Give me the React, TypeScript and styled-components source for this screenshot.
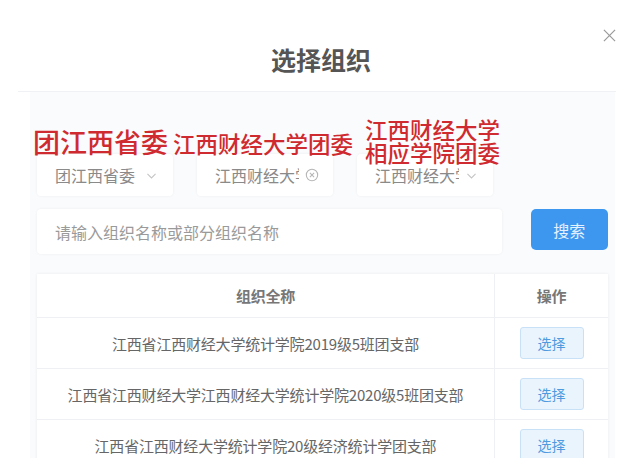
import styled, { createGlobalStyle } from 'styled-components';

const GlobalStyle = createGlobalStyle`
  html, body {
    margin: 0;
    padding: 0;
    background: #ffffff;
    font-family: "Noto Sans CJK SC", "Noto Sans", sans-serif;
  }
`;

const Dialog = styled.div`
  position: relative;
  width: 640px;
  height: 458px;
  overflow: hidden;
  background: #fff;
`;

const Header = styled.div`
  height: 92px;
  box-sizing: border-box;
  margin: 0 24px 0 18px;
  padding-top: 44px;
  display: flex;
  justify-content: center;
  border-bottom: 1px solid #f0f1f4;
`;

const Title = styled.h2`
  margin: 0 0 0 8px;
  font-size: 25px;
  line-height: 30px;
  font-weight: 700;
  color: #555;
`;

const CloseButton = styled.button`
  position: absolute;
  top: 26px;
  right: 22px;
  width: 18px;
  height: 18px;
  padding: 0;
  border: none;
  background: none;
  display: flex;
  align-items: center;
  justify-content: center;
`;

const Body = styled.div`
  position: relative;
  margin: 0 25px 0 30px;
  padding: 62px 7px 0 7px;
  background: #fafbfc;
  min-height: 400px;
`;

const Note = styled.div<{ size: number }>`
  position: absolute;
  color: #cf2a2f;
  font-size: ${({ size }) => size}px;
  line-height: 1;
  font-weight: 500;
  white-space: nowrap;
`;

const SelectRow = styled.div`
  display: flex;
  gap: 24px;
`;

const Select = styled.div`
  width: 136px;
  height: 42px;
  box-sizing: border-box;
  background: #fff;
  border-radius: 4px;
  box-shadow: 0 0 3px rgba(0, 0, 0, 0.06);
  display: flex;
  align-items: center;
  padding: 0 12px 0 18px;
  gap: 6px;
  color: #8a8a8a;
  font-size: 16px;
`;

const SelectText = styled.span`
  flex: 1;
  overflow: hidden;
  white-space: nowrap;
  max-width: 84px;
`;

const SearchRow = styled.div`
  display: flex;
  align-items: flex-start;
  margin-top: 13px;
  gap: 29px;
`;

const SearchInput = styled.div`
  width: 468px;
  height: 45px;
  box-sizing: border-box;
  background: #fff;
  border-radius: 4px;
  box-shadow: 0 0 3px rgba(0, 0, 0, 0.06);
  display: flex;
  align-items: center;
  padding-left: 18px;
  color: #9a9a9a;
  font-size: 16px;
`;

const SearchButton = styled.button`
  width: 78px;
  height: 41px;
  border: none;
  border-radius: 5px;
  background: #3d97ee;
  color: #e6f1ff;
  font-family: inherit;
  font-size: 16px;
`;

const Table = styled.div`
  margin-top: 20px;
  background: #fff;
  box-shadow: 0 0 3px rgba(0, 0, 0, 0.07);
  display: grid;
  grid-template-columns: 458px 113px;
`;

const Cell = styled.div<{ head?: boolean; last?: boolean }>`
  height: ${({ head }) => (head ? 44 : 51)}px;
  box-sizing: border-box;
  display: flex;
  align-items: center;
  justify-content: center;
  border-bottom: 1px solid #eef0f3;
  border-right: ${({ last }) => (last ? 'none' : '1px solid #eef0f3')};
  color: ${({ head }) => (head ? '#777' : '#666')};
  font-size: 15px;
  font-weight: ${({ head }) => (head ? 700 : 400)};
  white-space: nowrap;
  letter-spacing: -0.2px;
`;

const PickButton = styled.button`
  width: 64px;
  height: 32px;
  border: 1px solid #c9e1f6;
  border-radius: 3px;
  background: #eaf4fd;
  color: #4f9be0;
  font-family: inherit;
  font-size: 14px;
`;

const Chevron = () => (
  <svg width="13" height="13" viewBox="0 0 16 16" fill="none" stroke="#c4c4c4" strokeWidth="1.3">
    <path d="M3 6l5 5 5-5" />
  </svg>
);

const ClearIcon = () => (
  <svg width="14" height="14" viewBox="0 0 16 16" fill="none" stroke="#b5b5b5" strokeWidth="1.2">
    <circle cx="8" cy="8" r="6.5" />
    <path d="M5.6 5.6l4.8 4.8M10.4 5.6l-4.8 4.8" />
  </svg>
);

const rows = [
  '江西省江西财经大学统计学院2019级5班团支部',
  '江西省江西财经大学江西财经大学统计学院2020级5班团支部',
  '江西省江西财经大学统计学院20级经济统计学团支部',
];

export default function App() {
  return (
    <Dialog>
      <GlobalStyle />
      <Header>
        <Title>选择组织</Title>
      </Header>
      <CloseButton aria-label="关闭">
        <svg width="13" height="13" viewBox="0 0 14 14" stroke="#9a9a9a" strokeWidth="1.3">
          <path d="M1 1l12 12M13 1L1 13" />
        </svg>
      </CloseButton>
      <Body>
        <Note size={27} style={{ left: 3, top: 36 }}>团江西省委</Note>
        <Note size={22.5} style={{ left: 143, top: 40 }}>江西财经大学团委</Note>
        <Note size={22.5} style={{ left: 335, top: 26, lineHeight: '23px' }}>
          江西财经大学
          <br />
          相应学院团委
        </Note>
        <SelectRow>
          <Select>
            <SelectText>团江西省委</SelectText>
            <Chevron />
          </Select>
          <Select>
            <SelectText>江西财经大学</SelectText>
            <ClearIcon />
          </Select>
          <Select>
            <SelectText>江西财经大学</SelectText>
            <Chevron />
          </Select>
        </SelectRow>
        <SearchRow>
          <SearchInput>请输入组织名称或部分组织名称</SearchInput>
          <SearchButton>搜索</SearchButton>
        </SearchRow>
        <Table>
          <Cell head>组织全称</Cell>
          <Cell head last>操作</Cell>
          {rows.map((r) => (
            <>
              <Cell key={r}>{r}</Cell>
              <Cell last key={r + '-op'}>
                <PickButton>选择</PickButton>
              </Cell>
            </>
          ))}
        </Table>
      </Body>
    </Dialog>
  );
}
